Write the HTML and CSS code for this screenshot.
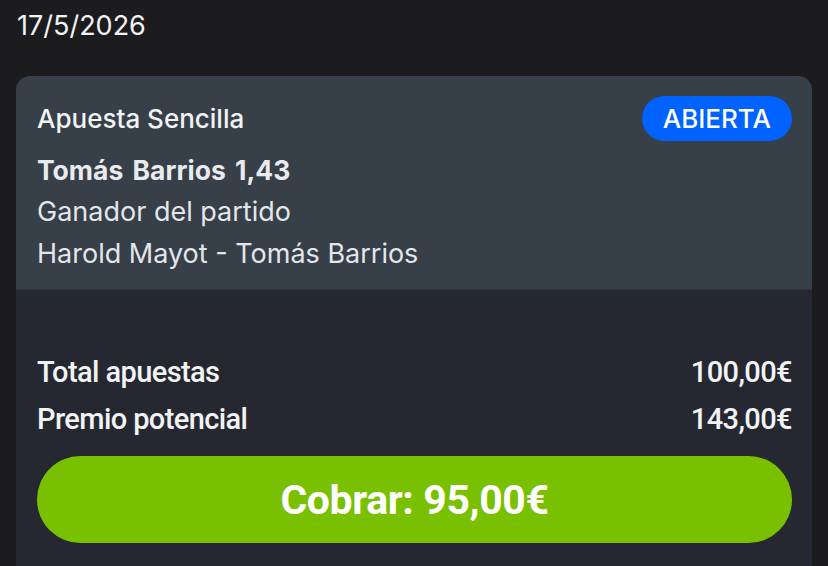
FILE: index.html
```html
<!DOCTYPE html>
<html>
<head>
<title>Apuesta</title>
<link rel="stylesheet" href="styles.css">
</head>
<body>
<div class="date">17/5/2026</div>

<div class="bet-card">
<div class="bet-head">
<div class="head-row">
<span class="bet-type">Apuesta Sencilla</span>
<span class="badge">ABIERTA</span>
</div>
<div class="selection"><span>Tomás Barrios</span> <span>1,43</span></div>
<div class="market">Ganador del partido</div>
<div class="market">Harold Mayot - Tomás Barrios</div>
</div>

<div class="bet-body">
<div class="sum-row">
<span>Total apuestas</span>
<span>100,00€</span>
</div>
<div class="sum-row">
<span>Premio potencial</span>
<span>143,00€</span>
</div>
<button type="button" class="cashout">Cobrar: 95,00€</button>
</div>
</div>
</body>
</html>
```

FILE: styles.css
```css
body {
margin: 0;
background-color: #1c1c1f;
font-family: Inter, "Noto Sans", sans-serif;
color: #f2f3f5;
padding: 0 16px;
height: 566px;
overflow: hidden;
}

.date {
font-size: 27px;
padding-top: 9px;
padding-left: 1px;
height: 67px;
}

.bet-card {
border-radius: 14px;
overflow: hidden;
background-color: #252830;
}

.bet-head {
background-color: #373f48;
padding: 20px 20px 14px 21px;
border-bottom: 1px solid #2f353d;
}

.head-row {
display: flex;
justify-content: space-between;
align-items: center;
margin-bottom: 8px;
}

.bet-type {
font-size: 26px;
font-weight: 500;
}

.badge {
background-color: #0062ff;
color: #fff;
font-size: 26px;
font-weight: 500;
padding: 0 21px;
height: 45px;
line-height: 45px;
border-radius: 23px;
}

.selection {
font-size: 26.5px;
font-weight: 700;
line-height: 42px;
color: #e9ebee;
word-spacing: 3px;
}

.market {
font-size: 27px;
line-height: 42px;
color: #e3e6ea;
}

.bet-body {
padding: 59px 20px 40px 21px;
font-family: Roboto, sans-serif;
}

.sum-row {
display: flex;
justify-content: space-between;
font-size: 29px;
font-weight: 500;
line-height: 47px;
letter-spacing: -0.6px;
}

.cashout {
display: block;
width: 100%;
height: 87px;
margin-top: 13px;
border: none;
border-radius: 44px;
background-color: #78c000;
color: #fff;
font-family: Roboto, sans-serif;
font-size: 41px;
font-weight: 700;
letter-spacing: -0.4px;
}
```
